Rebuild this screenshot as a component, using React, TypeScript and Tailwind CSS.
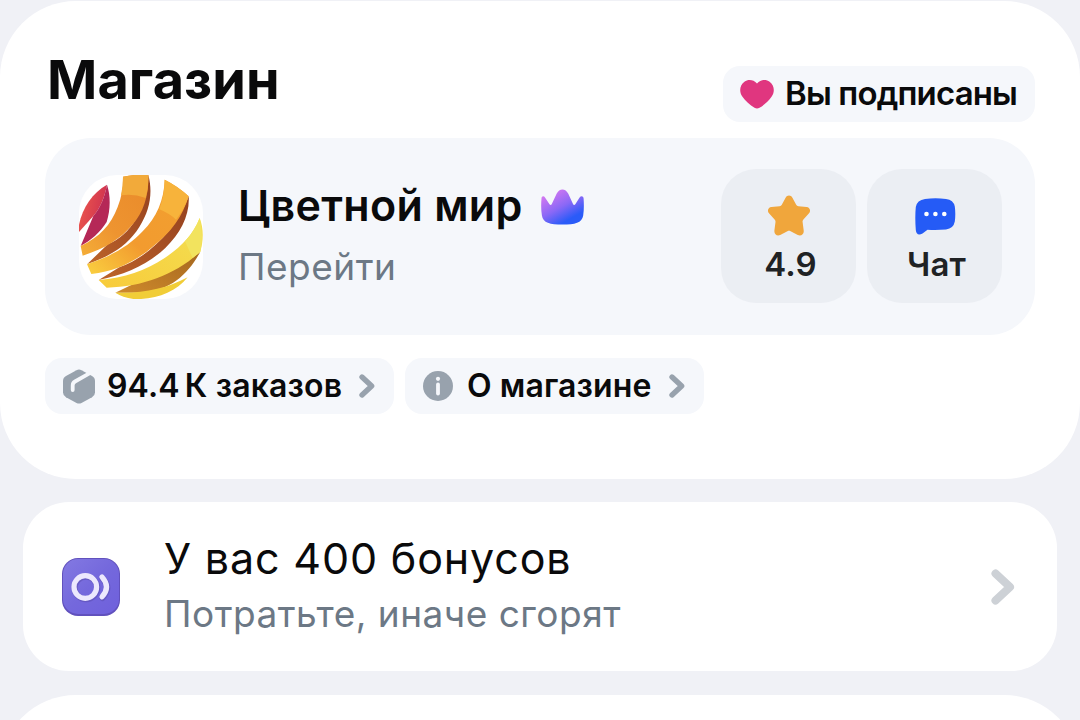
import type { ReactNode } from 'react';

function StoreLogo() {
  return (
    <svg viewBox="9 9 372 372" className="h-[124px] w-[124px] rounded-[38px] bg-white">
      <defs>
        <linearGradient id="red" x1="0" y1="0" x2="1" y2="0.3">
          <stop offset="0" stopColor="#ee5a4c" />
          <stop offset="1" stopColor="#d03350" />
        </linearGradient>
        <linearGradient id="orange" x1="1" y1="0" x2="0" y2="1">
          <stop offset="0" stopColor="#e98a2a" />
          <stop offset="0.6" stopColor="#ee9430" />
          <stop offset="1" stopColor="#f4ae38" />
        </linearGradient>
        <linearGradient id="amber" x1="1" y1="0" x2="0" y2="1">
          <stop offset="0" stopColor="#f2a030" />
          <stop offset="0.6" stopColor="#f29b2f" />
          <stop offset="1" stopColor="#fad040" />
        </linearGradient>
        <linearGradient id="yellow" x1="1" y1="0" x2="0" y2="1">
          <stop offset="0" stopColor="#f3df52" />
          <stop offset="1" stopColor="#f8cb3a" />
        </linearGradient>
        <linearGradient id="brown" x1="1" y1="0" x2="0" y2="1">
          <stop offset="0" stopColor="#94401f" />
          <stop offset="1" stopColor="#bd642a" />
        </linearGradient>
        <linearGradient id="ochre" x1="1" y1="0" x2="0" y2="1">
          <stop offset="0" stopColor="#a5671f" />
          <stop offset="1" stopColor="#cf8a2c" />
        </linearGradient>
      </defs>
      {/* red petal */}
      <path d="M93 38C50 62 20 105 9 158V180L52 132C74 106 86 74 93 38Z" fill="url(#red)" />
      <path d="M93 38C104 70 104 112 92 150C72 182 44 206 14 222L52 132C74 106 86 74 93 38Z" fill="#b52857" />
      {/* first orange band */}
      <path d="M217 9C231 62 222 115 190 165C158 215 112 250 34 276L96 216C165 190 211 110 217 9Z" fill="url(#brown)" />
      <path d="M141 14Q178 6 217 9C219 66 205 118 168 160C134 200 88 230 20 251L14 222C72 194 104 160 125 105C138 72 142 42 141 14Z" fill="url(#orange)" />
      <path d="M141 14Q178 6 217 9Q219 46 209 78Q172 64 135 70Q141 42 141 14Z" fill="#f2aa3a" />
      {/* second orange band */}
      <path d="M338 73C342 128 314 184 268 228C214 278 148 308 68 324L130 286C216 256 300 174 338 73Z" fill="url(#brown)" />
      <path d="M266 23Q308 44 338 73C320 132 286 182 230 224C174 272 116 298 46 306L33 277C112 250 158 222 200 178C242 136 264 84 266 23Z" fill="url(#amber)" />
      <path d="M266 23Q308 44 338 73Q324 114 300 143Q280 124 250 112Q266 68 266 23Z" fill="#f7b33b" />
      {/* yellow bands */}
      <path d="M373 239C336 308 284 354 200 362H118L184 330C254 318 314 284 373 239Z" fill="url(#ochre)" />
      <path d="M371 138C384 172 382 206 373 239C300 306 204 344 92 347L68 324C146 318 208 296 266 258C314 226 352 188 371 138Z" fill="url(#yellow)" />
      <path d="M371 138Q384 190 373 239L350 258L327 208Q355 178 371 138Z" fill="#f2e35e" />
      <path d="M335 316C298 362 238 384 172 381Q140 376 118 362C196 366 272 350 335 316Z" fill="#f1cd37" />
    </svg>
  );
}

function Crown() {
  return (
    <svg viewBox="0 0 43 36" className="h-[36px] w-[43px]">
      <defs>
        <linearGradient id="crown" x1="0.1" y1="0.05" x2="0.75" y2="1">
          <stop offset="0" stopColor="#e07af0" />
          <stop offset="0.5" stopColor="#8a68f6" />
          <stop offset="0.85" stopColor="#2a5bf8" />
        </linearGradient>
      </defs>
      <path
        d="M0.5 9.5C0.5 7.2 2.8 6.6 4 8.5L8.5 15.2C9.2 16.3 10.3 16.2 10.8 15L15.6 4.8C18.4-1 24.4-1 27.3 4.8L32 15C32.5 16.2 33.6 16.3 34.3 15.2L38.6 8.5C39.8 6.6 42.5 7 42.6 9.5C43 15 43 21 42.2 26.5C41 34 34 35.5 21.5 35.5C9 35.5 2 34 .9 26.5C0 21 0 15 .5 9.5Z"
        fill="url(#crown)"
      />
    </svg>
  );
}

function Heart() {
  return (
    <svg viewBox="0 0 34 29" className="h-[29px] w-[34px]">
      <path
        d="M17 3.4C13.4-.6 8-.9 4.4 1.7C-.6 5.3-.9 12 2.3 16.5C5.3 21 10 25.2 14.5 27.8C16.2 28.8 17.8 28.8 19.5 27.8C24 25.2 28.7 21 31.7 16.5C34.9 12 34.6 5.3 29.6 1.7C26-.9 20.6-.6 17 3.4Z"
        fill="#e0367f"
      />
    </svg>
  );
}

function Star() {
  return (
    <svg viewBox="0 0 42 41" className="mb-[2px] h-[41px] w-[42px]">
      <path
        d="M17.6 2.7C19-.3 23-.3 24.4 2.7L28.2 9.8C28.7 10.7 29.4 11.1 30.4 11.2L38.6 12C42 12.4 43.2 16.3 40.8 18.5L35.4 24.4C34.7 25.2 34.4 26 34.6 27L35.7 35.5C36.2 39.2 33 41.5 29.8 40L22.6 36.2C21.5 35.6 20.5 35.6 19.4 36.2L12.2 40C9 41.5 6 39.2 6.4 35.5L7.5 27C7.6 26 7.3 25.2 6.6 24.4L1.2 18.5C-1.2 16.3 0 12.4 3.4 12L11.6 11.2C12.6 11.1 13.3 10.7 13.8 9.8Z"
        fill="#f0a63c"
      />
    </svg>
  );
}

function ChatBubble() {
  return (
    <svg viewBox="0 0 41 37" className="ml-[1px] h-[37px] w-[41px]">
      <path
        d="M10 .9Q20.500-.5 31 .9Q38.500 1.700 39.800 8.500Q40.800 16 39.800 23.500Q38.500 30.600 31 31.400Q22 32.200 12.500 31.700L7.500 35.500Q1.500 38.500 .8 32Q-.2 19 .8 9Q2 1.900 10 .9Z"
        fill="#255bf6"
      />
      <circle cx="11.500" cy="16" r="2.300" fill="#fff" />
      <circle cx="20.400" cy="16" r="2.300" fill="#fff" />
      <circle cx="29.300" cy="16" r="2.300" fill="#fff" />
    </svg>
  );
}

function Box() {
  return (
    <svg viewBox="0 0 32 35" className="h-[35px] w-[32px]">
      <path
        d="M13.500 1.200Q16 0 18.500 1.200L29 7Q32 8.700 32 12V23.500Q32 26.500 29 28.200L18.500 34Q16 35.200 13.500 34L3 28.200Q0 26.500 0 23.500V12Q0 8.700 3 7Z"
        fill="#98a2ad"
      />
      <path
        d="M9.700 21V16.500Q9.700 13.800 12 12.500L29 2.800"
        stroke="#f5f7fb"
        strokeWidth="3.800"
        strokeLinecap="round"
        fill="none"
      />
    </svg>
  );
}

function Info() {
  return (
    <svg viewBox="0 0 30 30" className="h-[30px] w-[30px]">
      <circle cx="15" cy="15" r="15" fill="#98a2ad" />
      <circle cx="15" cy="7.800" r="2.100" fill="#f5f7fb" />
      <path d="M15 13.500V22.500" stroke="#f5f7fb" strokeWidth="3.800" strokeLinecap="round" />
    </svg>
  );
}

function Chevron({ className }: { className: string }) {
  return (
    <svg viewBox="0 0 24 36" className={className} fill="none" stroke="currentColor">
      <path d="M4.500 4.500L19 18L4.500 31.500" strokeWidth="8" strokeLinecap="round" strokeLinejoin="round" />
    </svg>
  );
}

function BonusIcon() {
  return (
    <svg viewBox="0 0 58 58" className="h-[58px] w-[58px]">
      <defs>
        <linearGradient id="bonus" x1="0" y1="0" x2="1" y2="1">
          <stop offset="0" stopColor="#8379e2" />
          <stop offset="0.5" stopColor="#7468dc" />
          <stop offset="1" stopColor="#6f60dc" />
        </linearGradient>
      </defs>
      <rect width="58" height="58" rx="16" fill="#6151bd" />
      <rect x="1" y="1" width="56" height="55" rx="15" fill="url(#bonus)" />
      <g fill="none" strokeLinecap="round">
        <g stroke="#5a4cae" opacity="0.5" strokeWidth="6">
          <circle cx="24" cy="30" r="11.300" />
          <path d="M40.500 20.500Q50 29.500 40.500 40" />
        </g>
        <g stroke="#ece8fd" strokeWidth="5.200">
          <circle cx="23.300" cy="29" r="11.300" />
          <path d="M40 19Q49 29 40 38.800" />
        </g>
      </g>
    </svg>
  );
}

function Tile({ icon, label }: { icon: ReactNode; label: string }) {
  return (
    <button className="flex h-[134px] w-[135px] flex-col items-center rounded-[35px] bg-[#ebeef3] pt-[26px] text-[#202224]">
      <span className="flex h-[42px] items-center">{icon}</span>
      <span className="mt-[7px] ml-[4px] text-[33px] leading-[40px] font-semibold tracking-[0.2px]">{label}</span>
    </button>
  );
}

export default function App() {
  return (
    <div className="flex h-[720px] w-[1080px] flex-col overflow-hidden bg-[#f0f1f6] pt-px font-['Inter','Liberation_Sans',sans-serif] text-[#0a0a0b]">
      {/* Store */}
      <section className="h-[478px] shrink-0 rounded-[76px] bg-white px-[45px] pt-[65px]">
        <div className="flex h-[56px] items-start justify-between">
          <h1 className="-mt-[19px] ml-[2px] text-[54px] leading-[66px] font-bold tracking-[0.1px] whitespace-nowrap">
            Магазин
          </h1>
          <button className="flex h-[56px] w-[312px] items-center rounded-[17px] bg-[#f5f7fb] pl-[17px] whitespace-nowrap">
            <Heart />
            <span className="-mt-[2px] ml-[11px] text-[33px] leading-[40px] font-semibold tracking-[-0.85px]">Вы подписаны</span>
          </button>
        </div>

        <div className="mt-[16px] flex h-[197px] items-start rounded-[46px] bg-[#f5f7fb] pt-[31px] pr-[33px] pl-[34px]">
          <div className="mt-[6px] shrink-0">
            <StoreLogo />
          </div>
          <div className="ml-[35px] flex-1 whitespace-nowrap">
            <div className="mt-[10px] flex h-[52px] items-center">
              <span className="text-[43px] leading-[52px] font-semibold tracking-[0.3px]">Цветной мир</span>
              <span className="mt-[3px] ml-[18px]">
                <Crown />
              </span>
            </div>
            <div className="mt-[14px] text-[37px] leading-[44px] tracking-[0.5px] text-[#6c7885]">Перейти</div>
          </div>
          <div className="flex gap-[11px]">
            <Tile icon={<Star />} label="4.9" />
            <Tile icon={<ChatBubble />} label="Чат" />
          </div>
        </div>

        <div className="mt-[23px] flex gap-[11px]">
          <button className="flex h-[56px] w-[349px] items-center rounded-[17px] bg-[#f5f7fb] pr-[19px] pl-[18px] whitespace-nowrap">
            <Box />
            <span className="ml-[12px] flex-1 text-left text-[32px] leading-[40px] font-semibold tracking-[0.15px]">
              94.4<span className="ml-[5px]">К</span> заказов
            </span>
            <Chevron className="h-[24px] w-[16px] text-[#98a2ad]" />
          </button>
          <button className="flex h-[56px] w-[299px] items-center rounded-[17px] bg-[#f5f7fb] pr-[19px] pl-[18px] whitespace-nowrap">
            <Info />
            <span className="ml-[14px] flex-1 text-left text-[32px] leading-[40px] font-semibold tracking-[0.1px]">О магазине</span>
            <Chevron className="h-[24px] w-[16px] text-[#98a2ad]" />
          </button>
        </div>
      </section>

      {/* Bonuses */}
      <section className="mx-[23px] mt-[23px] flex h-[169px] shrink-0 items-center rounded-[46px] bg-white pr-[42px] pl-[39px]">
        <BonusIcon />
        <div className="ml-[44px] flex-1 whitespace-nowrap">
          <div className="-mt-[2px] text-[43px] leading-[56px] tracking-[0.85px]">У вас 400 бонусов</div>
          <div className="text-[37px] leading-[56px] tracking-[0.5px] text-[#6c7885]">Потратьте, иначе сгорят</div>
        </div>
        <Chevron className="h-[36px] w-[24px] text-[#cdd1d6]" />
      </section>

      <section className="mt-[24px] h-[200px] shrink-0 rounded-t-[76px] bg-white" />
    </div>
  );
}
